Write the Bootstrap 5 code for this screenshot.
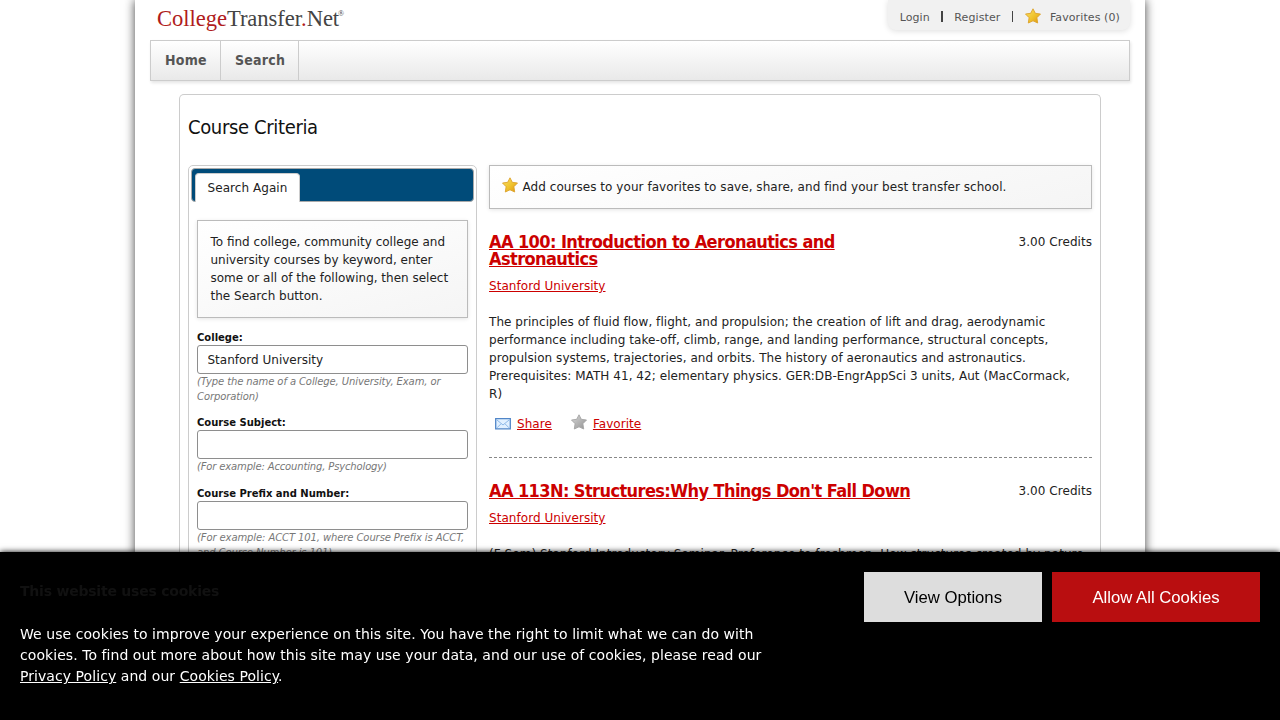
<!DOCTYPE html>
<html lang="en">
<head>
<meta charset="utf-8">
<meta name="viewport" content="width=device-width, initial-scale=1">
<title>CollegeTransfer.Net - Course Criteria</title>
<link rel="stylesheet" href="https://cdn.jsdelivr.net/npm/bootstrap@5.3.0/dist/css/bootstrap.min.css">
<style>
body{font-family:"DejaVu Sans",sans-serif;font-size:12px;line-height:18px;letter-spacing:.05px;color:#222;background:#fff;height:720px;overflow:hidden}
.page-shell{width:1010px;height:720px;padding:0 15px;background:#fff;box-shadow:0 0 10px #444}
.top-row{height:40px}
.brand-name{font-family:"Liberation Serif",serif;font-size:22.6px;line-height:24px;color:#444;padding:7px 0 0 7px;letter-spacing:-.05px}
.brand-name b{font-weight:400;color:#b01c20}
.brand-name sup{font-size:8px;top:-10px;margin-left:-1px}
.user-links{height:30px;padding:5px 10px 0 12px;background:#f1f1f1;border-radius:0 0 8px 8px;box-shadow:0 1px 6px #ddd;font-size:11px;letter-spacing:.1px}
.user-links a{color:#555;text-decoration:none}
.ul-sep{width:1.5px;height:11px;background:#444;margin:-2px 11.5px 0 11.5px}
.user-links svg{margin:-4px 9px 0 0}
.main-nav{height:41px;border:1px solid #ccc;background:linear-gradient(#fff,#e9e9e9);box-shadow:1px 2px 3px #e5e5e5}
.main-nav a{font-family:"DejaVu Sans Condensed","DejaVu Sans",sans-serif;font-stretch:condensed;font-size:14px;font-weight:700;color:#555;padding:0 13px 0 14px;border-right:1px solid #ccc;line-height:38px;letter-spacing:.25px}
.content-box{width:922px;height:625px;margin-top:13px;border:1px solid #ccc;border-bottom:0;border-radius:5px 5px 0 0;padding:0 8px;overflow:hidden}
h1{font-family:"DejaVu Sans Condensed","DejaVu Sans",sans-serif;font-stretch:condensed;font-size:20px;line-height:24px;letter-spacing:-.35px;color:#111;margin:20px 0 26px;font-weight:400}
.side-box{width:289px;height:720px;border:1px solid #ccc;border-radius:5px;padding:2px}
.tab-bar{height:34px;background:#004b79;border:1px solid #aaa;border-radius:4px;padding:4px 0 0 3px}
.tab-bar a{height:29px;width:105px;background:#fff;border-radius:4px 4px 0 0;color:#222;text-decoration:none;line-height:29px;border:1px solid #ccc;border-bottom:0}
.form-area{padding:18px 6px 0}
.hint-box{border:1px solid #bbb;background:linear-gradient(165deg,#fff,#f5f5f5);box-shadow:0 1px 4px #e5e5e5}
.hint-pad{padding:12px 8px 12px 12.5px;letter-spacing:0}
.form-area label{display:block;font-size:10px;line-height:15px;font-weight:700;color:#111;letter-spacing:0}
.form-area .form-control{height:29px;font-size:12px;line-height:18px;border:1px solid #8e8e8e;border-radius:3px;color:#222;padding:4px 9.5px}
.help-text{font-size:10px;line-height:15px;font-style:italic;letter-spacing:-.1px;color:#777;margin-bottom:11px}
.help-text.one-line{margin-bottom:12px;letter-spacing:-.15px}
.results{width:603px}
.results a{color:#c00}
h2{font-family:"DejaVu Sans Condensed","DejaVu Sans",sans-serif;font-stretch:condensed;font-size:18px;line-height:17px;font-weight:700;letter-spacing:-.59px;width:400px;margin:0 0 10px}
.wide-title{width:460px}
.course-item+.course-item{border-top:1px dashed #888;margin-top:24px;padding-top:24px}
.fav-note{height:44px;padding:0 12px;margin-bottom:24px}
.fav-note svg{margin:-4px 4.5px 0 0}
.course-text{margin:18px 0 12px}
.course-actions{padding-left:6px;height:18px}
.mail-icon{margin-right:6px}
.grey-star{margin:-4px 6px 0 19px}
.cookie-bar{height:168px;background:#000;color:#fff;padding:20px;box-shadow:0 0 6px #000;font-size:14px;line-height:21px;letter-spacing:.06px}
.cookie-bar h3{font-size:14px;line-height:18px;font-weight:700;letter-spacing:-.22px;color:#111;margin:10px 0 24px}
.cookie-copy{width:760px}
.cookie-bar a{color:#fff}
.cookie-bar button{height:50px;border:0;font:16.7px "Liberation Sans",sans-serif;border-radius:0;padding:1px 0 0}
.opt-btn{width:178px;background:#ddd;color:#000}
.allow-btn{width:208px;background:#b90e10;color:#fff}
</style>
</head>
<body>
<svg width="0" height="0" class="position-absolute" aria-hidden="true">
<defs>
<linearGradient id="goldFill" x1="0" y1="0" x2="1" y2="1"><stop offset="0" stop-color="#fbe46a"/><stop offset=".55" stop-color="#efc22c"/><stop offset="1" stop-color="#dc9312"/></linearGradient>
<linearGradient id="greyFill" x1="0" y1="0" x2="1" y2="1"><stop offset="0" stop-color="#d8d8d8"/><stop offset="1" stop-color="#929292"/></linearGradient>
<path id="star" d="M8 .8 10.3 5.3 15.5 6 11.9 9.7 12.7 15 8 12.8 3.3 15 4.1 9.7.5 6 5.7 5.3Z" stroke-width=".9" stroke-linejoin="round"/>
</defs>
</svg>
<div class="page-shell mx-auto">
  <header class="top-row d-flex justify-content-between align-items-start">
    <div class="brand-name"><b>College</b>Transfer<b>.</b>Net<sup>®</sup></div>
    <div class="user-links d-flex align-items-center">
      <a href="#">Login</a><span class="ul-sep"></span><a href="#">Register</a><span class="ul-sep"></span>
      <svg width="16" height="16"><use href="#star" fill="url(#goldFill)" stroke="#dda32d"/></svg><a href="#">Favorites (0)</a>
    </div>
  </header>
  <nav class="main-nav d-flex"><a class="text-decoration-none" href="#">Home</a><a class="text-decoration-none" href="#">Search</a></nav>
  <main class="content-box mx-auto">
    <h1>Course Criteria</h1>
    <div class="d-flex justify-content-between align-items-start">
      <aside class="side-box">
        <div class="tab-bar"><a class="d-block text-center" href="#">Search Again</a></div>
        <form class="form-area">
          <div class="hint-box hint-pad mb-2">To find college, community college and university courses by keyword, enter some or all of the following, then select the Search button.</div>
          <div class="pt-1"><label for="college">College:</label><input id="college" class="form-control" value="Stanford University"><div class="help-text">(Type the name of a College, University, Exam, or Corporation)</div></div>
          <div><label for="subject">Course Subject:</label><input id="subject" class="form-control"><div class="help-text one-line">(For example: Accounting, Psychology)</div></div>
          <div><label for="prefix">Course Prefix and Number:</label><input id="prefix" class="form-control"><div class="help-text">(For example: ACCT 101, where Course Prefix is ACCT, and Course Number is 101)</div></div>
        </form>
      </aside>
      <section class="results">
        <div class="hint-box fav-note d-flex align-items-center"><svg width="16" height="16"><use href="#star" fill="url(#goldFill)" stroke="#dda32d"/></svg><span>Add courses to your favorites to save, share, and find your best transfer school.</span></div>
        <article class="course-item">
          <div class="d-flex justify-content-between"><h2><a href="#">AA 100: Introduction to Aeronautics and Astronautics</a></h2><span>3.00 Credits</span></div>
          <a href="#">Stanford University</a>
          <p class="course-text pe-2">The principles of fluid flow, flight, and propulsion; the creation of lift and drag, aerodynamic performance including take-off, climb, range, and landing performance, structural concepts, propulsion systems, trajectories, and orbits. The history of aeronautics and astronautics. Prerequisites: MATH 41, 42; elementary physics. GER:DB-EngrAppSci 3 units, Aut (MacCormack, R)</p>
          <div class="course-actions d-flex align-items-center">
            <svg class="mail-icon" width="16" height="12" fill="none"><path d="M.7.7h14.6v10.1H.7Z" fill="#e1f0ff" stroke="#5186c8" stroke-width="1.3"/><path d="m2 2 6 5 6-5M2 9.8l4-4M14 9.8l-4-4" stroke="#8cb8e8"/></svg><a href="#">Share</a>
            <svg class="grey-star" width="16" height="16"><use href="#star" fill="url(#greyFill)" stroke="#a5a5a5"/></svg><a href="#">Favorite</a>
          </div>
        </article>
        <article class="course-item">
          <div class="d-flex justify-content-between"><h2 class="wide-title"><a href="#">AA 113N: Structures:Why Things Don't Fall Down</a></h2><span>3.00 Credits</span></div>
          <a href="#">Stanford University</a>
          <p class="course-text">(F,Sem) Stanford Introductory Seminar. Preference to freshmen. How structures created by nature</p>
        </article>
      </section>
    </div>
  </main>
</div>
<div class="cookie-bar fixed-bottom d-flex justify-content-between align-items-start">
  <div class="cookie-copy"><h3>This website uses cookies</h3>We use cookies to improve your experience on this site. You have the right to limit what we can do with cookies. To find out more about how this site may use your data, and our use of cookies, please read our <a href="#">Privacy Policy</a> and our <a href="#">Cookies Policy</a>.</div>
  <div class="d-flex" style="gap:10px"><button class="opt-btn">View Options</button><button class="allow-btn">Allow All Cookies</button></div>
</div>
<script src="https://cdn.jsdelivr.net/npm/bootstrap@5.3.0/dist/js/bootstrap.bundle.min.js"></script>
</body>
</html>
